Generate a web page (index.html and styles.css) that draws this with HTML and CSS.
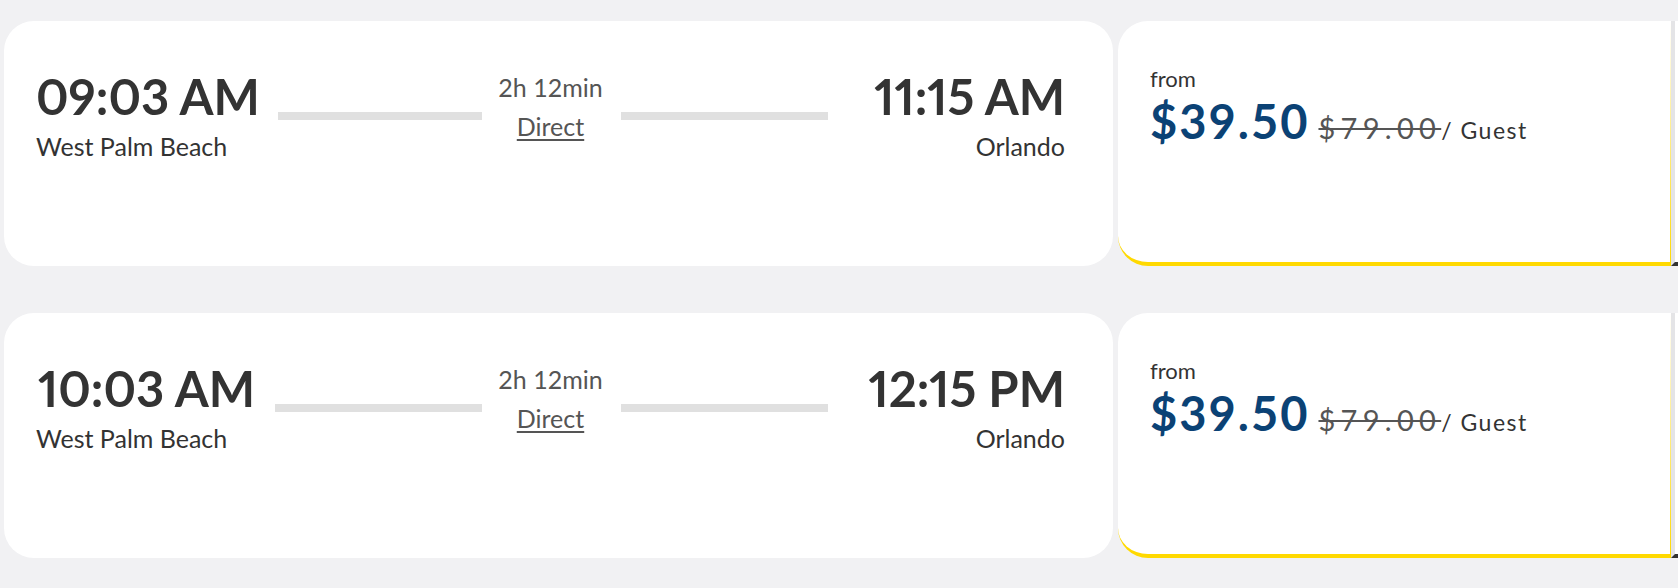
FILE: index.html
```html
<!DOCTYPE html>
<html lang="en">
<head>
<meta charset="utf-8">
<title>Trips</title>
<link rel="stylesheet" href="styles.css">
</head>
<body>
<div class="list">
  <div class="trip">
    <div class="route">
      <div class="side">
        <div class="stop">
          <div class="time">09:03 AM</div>
          <div class="city">West Palm Beach</div>
        </div>
        <div class="track"></div>
      </div>
      <div class="duration">
        <div class="dur">2h 12min</div>
        <a class="direct" href="#">Direct</a>
      </div>
      <div class="side">
        <div class="track"></div>
        <div class="stop stop-end">
          <div class="time">11:15 AM</div>
          <div class="city">Orlando</div>
        </div>
      </div>
    </div>
    <div class="fare">
      <div class="from">from</div>
      <div class="price-row">
        <span class="price">$39.50</span><span class="old">$79.00</span><span class="per">/ Guest</span>
      </div>
    </div>
    <div class="peek"></div>
  </div>

  <div class="trip">
    <div class="route">
      <div class="side">
        <div class="stop">
          <div class="time">10:03 AM</div>
          <div class="city">West Palm Beach</div>
        </div>
        <div class="track"></div>
      </div>
      <div class="duration">
        <div class="dur">2h 12min</div>
        <a class="direct" href="#">Direct</a>
      </div>
      <div class="side">
        <div class="track"></div>
        <div class="stop stop-end">
          <div class="time">12:15 PM</div>
          <div class="city">Orlando</div>
        </div>
      </div>
    </div>
    <div class="fare">
      <div class="from">from</div>
      <div class="price-row">
        <span class="price">$39.50</span><span class="old">$79.00</span><span class="per">/ Guest</span>
      </div>
    </div>
    <div class="peek"></div>
  </div>
</div>
</body>
</html>
```
FILE: styles.css
```css
* { box-sizing: border-box; }

html, body {
  margin: 0;
  background: #f1f1f3;
  overflow: hidden;
}

body {
  font-family: "Lato", "Open Sans", sans-serif;
  color: #333;
}

.list {
  display: flex;
  flex-direction: column;
  gap: 47px;
  padding: 21px 0 0 4px;
}

.trip {
  display: flex;
  gap: 5px;
  height: 245px;
}

.route {
  flex: 0 0 1109px;
  background: #fff;
  border-radius: 30px;
  display: grid;
  grid-template-columns: 1fr auto 1fr;
  align-items: start;
  padding: 47px 48px 0 32px;
}

.side {
  display: flex;
  align-items: flex-start;
}

.stop {
  display: flex;
  flex-direction: column;
  min-width: 221px;
}

.stop .time {
  text-align: center;
}

.stop-end {
  text-align: right;
}

.stop-end .time {
  text-align: right;
}

.time {
  font-size: 49px;
  line-height: 56px;
  font-weight: 700;
  color: #333;
  font-variant-numeric: proportional-nums;
  white-space: nowrap;
}

.city {
  font-size: 25px;
  line-height: 28px;
  font-weight: 400;
  color: #333;
  margin-top: 8px;
  white-space: nowrap;
}

.track {
  flex: 1;
  height: 8px;
  background: #e0e0e0;
  margin: 44px 16px 0 18px;
}

.stop-end ~ .track,
.side .track:first-child {
  margin: 44px 16px 0 18px;
}

.duration {
  text-align: center;
  color: #555;
  font-size: 25px;
  line-height: 32px;
}

.dur {
  margin-top: 3px;
  white-space: nowrap;
}

.direct {
  display: block;
  margin-top: 7px;
  color: #555;
  text-decoration: underline;
  text-decoration-thickness: 2px;
  text-underline-offset: 3px;
}

.fare {
  flex: 0 0 553px;
  position: relative;
  background: #fff;
  border-radius: 30px 0 0 30px;
  border-bottom: 4px solid #ffd900;
  padding: 45px 0 0 32px;
}

.fare::after {
  content: "";
  position: absolute;
  right: 0;
  top: 0;
  bottom: -4px;
  width: 1px;
  background: linear-gradient(to bottom, rgba(255, 217, 0, 0), #ffd900);
}

.from {
  font-size: 22px;
  line-height: 26px;
  font-weight: 400;
  color: #333;
}

.price-row {
  display: flex;
  align-items: baseline;
  margin-top: 2px;
  white-space: nowrap;
}

.price {
  font-size: 47px;
  line-height: 54px;
  font-weight: 700;
  color: #0b4275;
  letter-spacing: 2px;
}

.old {
  margin-left: 9px;
  font-size: 29px;
  color: #555;
  letter-spacing: 5.3px;
  text-decoration: line-through;
  text-decoration-thickness: 2px;
}

.per {
  font-size: 23px;
  color: #333;
  letter-spacing: 1.5px;
}

.peek {
  flex: 0 0 7px;
  margin-left: -5px;
  background: #fff;
  border-left: 4px solid #e4e4e6;
  border-bottom: 4px solid #333;
}
```
